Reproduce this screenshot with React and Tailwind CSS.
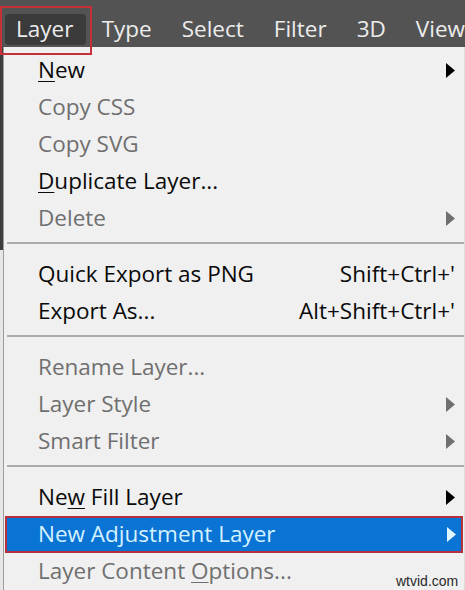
import React from 'react';

const FONT = { fontFamily: '"Open Sans", "Noto Sans", "Liberation Sans", sans-serif' };

const sections = [
  [
    { label: 'New', mn: 0, arrow: true },
    { label: 'Copy CSS', disabled: true },
    { label: 'Copy SVG', disabled: true },
    { label: 'Duplicate Layer...', mn: 0 },
    { label: 'Delete', disabled: true, arrow: true },
  ],
  [
    { label: 'Quick Export as PNG', shortcut: "Shift+Ctrl+'" },
    { label: 'Export As...', shortcut: "Alt+Shift+Ctrl+'" },
  ],
  [
    { label: 'Rename Layer...', disabled: true },
    { label: 'Layer Style', disabled: true, arrow: true },
    { label: 'Smart Filter', disabled: true, arrow: true },
  ],
  [
    { label: 'New Fill Layer', mn: 2, arrow: true },
    { label: 'New Adjustment Layer', arrow: true, active: true },
    { label: 'Layer Content Options...', disabled: true, mn: 14 },
  ],
];

const Arrow = ({ color }) => (
  <svg width="9" height="15" viewBox="0 0 9 15" className="shrink-0">
    <polygon points="0,0 9,7.5 0,15" fill={color} />
  </svg>
);

const Label = ({ text, mn }) => {
  if (mn === undefined) return <span>{text}</span>;
  return (
    <span>
      {text.slice(0, mn)}
      <span className="underline underline-offset-[3px] decoration-1">{text[mn]}</span>
      {text.slice(mn + 1)}
    </span>
  );
};

const Row = ({ item }) => {
  const color = item.active ? 'text-[#d4f1ff]' : item.disabled ? 'text-[#6f6f6f]' : 'text-[#0a0a0a]';
  const arrowColor = item.active ? '#dff5ff' : item.disabled ? '#6f6f6f' : '#000';
  if (item.active) {
    return (
      <div className="h-[37px] ml-[1px] mr-[1px] border-2 border-[#b4303e] bg-[#0a74d4] flex items-center justify-between pl-[31px] pr-[5px]">
        <span className={color}><Label text={item.label} mn={item.mn} /></span>
        {item.arrow && <Arrow color={arrowColor} />}
      </div>
    );
  }
  return (
    <div className="h-[37px] flex items-center justify-between pl-[34px] pr-[9px]">
      <span className={color}><Label text={item.label} mn={item.mn} /></span>
      {item.shortcut && <span className={color}>{item.shortcut}</span>}
      {item.arrow && <Arrow color={arrowColor} />}
    </div>
  );
};

const Separator = () => (
  <div className="h-[19px] pt-[5px] pl-[3px]">
    <div className="h-[2px] bg-[#ababab]" />
  </div>
);

export default function App() {
  const bar = ['Type', 'Select', 'Filter', '3D', 'View'];
  return (
    <div className="w-[465px] h-[590px] overflow-hidden relative bg-[#f0f0f0]" style={FONT}>
      {/* menu bar */}
      <div className="h-[47px] bg-[#535353] flex items-start pt-[14px] text-[22.5px] text-[#ececec] whitespace-nowrap">
        <div className="ml-[5px] w-[82px] h-[31px] rounded-[4px] bg-[#3b3b3b] flex items-center pl-[11px] leading-none">
          Layer
        </div>
        <div className="flex gap-[30px] ml-[16px] h-[31px] items-center leading-none">
          {bar.map((b) => (
            <span key={b}>{b}</span>
          ))}
        </div>
      </div>

      {/* red outline on Layer */}
      <div className="absolute left-0 top-[6px] w-[92px] h-[49px] border-2 border-[#c53039]" />

      <div className="flex">
        <div className="w-[3px] flex flex-col">
          <div className="h-[203px] bg-[#3d3d3d]" />
          <div className="flex-1 bg-[#e6e6e6]" />
        </div>
        <div className="flex-1 border-l border-[#9c9c9c] border-r border-r-[#dcdcdc] pt-[5px] text-[22.5px] leading-none h-[543px]">
          {sections.map((sec, i) => (
            <div key={i}>
              {i > 0 && <Separator />}
              {sec.map((item) => (
                <Row key={item.label} item={item} />
              ))}
            </div>
          ))}
        </div>
      </div>

      <span className="absolute left-[396px] top-[571px] text-[14px] text-[#2a2a2a]" style={{ fontFamily: '"Liberation Sans", sans-serif' }}>
        wtvid.com
      </span>
    </div>
  );
}
